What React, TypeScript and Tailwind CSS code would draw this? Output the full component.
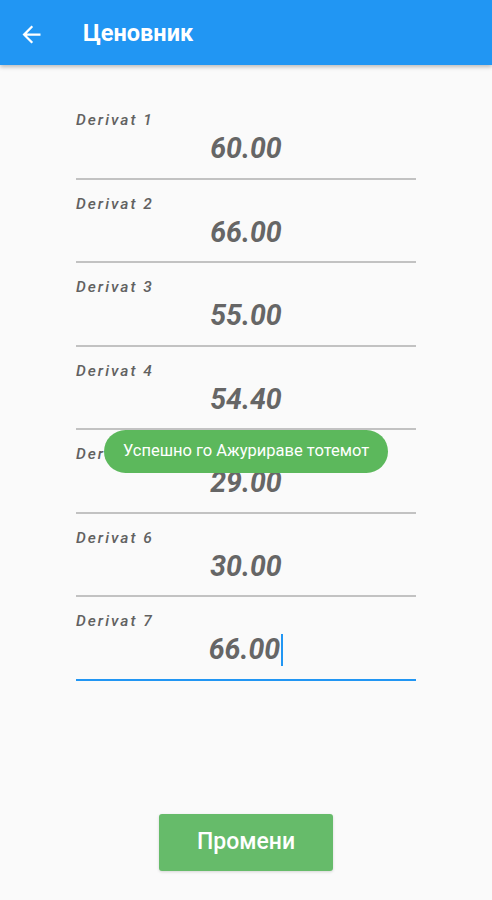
const PRICES = [
  { label: 'Derivat 1', value: '60.00' },
  { label: 'Derivat 2', value: '66.00' },
  { label: 'Derivat 3', value: '55.00' },
  { label: 'Derivat 4', value: '54.40' },
  { label: 'Derivat 5', value: '29.00' },
  { label: 'Derivat 6', value: '30.00' },
  { label: 'Derivat 7', value: '66.00' },
];

function BackArrow() {
  return (
    <svg width="27" height="27" viewBox="0 0 24 24" fill="white">
      <path d="M20 11H7.83l5.59-5.59L12 4l-8 8 8 8 1.41-1.41L7.83 13H20v-2z" />
    </svg>
  );
}

function PriceField({ label, value, focused }: { label: string; value: string; focused?: boolean }) {
  return (
    <div
      className={`flex flex-col h-[83.5px] pt-[15px] border-b-2 ${
        focused ? 'border-[#2196f3]' : 'border-[#c2c2c2]'
      }`}
    >
      <span className="text-[15.5px] leading-[18px] font-medium italic tracking-[2px] text-[#616161]">
        {label}
      </span>
      <div className="flex justify-center items-center h-[36px] mt-[2px]">
        <span className="text-[28.5px] leading-[34px] font-bold italic text-[#666666]">{value}</span>
        {focused && <span className="inline-block w-[2px] h-[32px] bg-[#2196f3] ml-[1px]" />}
      </div>
    </div>
  );
}

export default function App() {
  return (
    <div className="relative min-h-[900px] bg-[#fafafa] font-['Roboto',sans-serif]">
      <div className="flex items-center h-[65px] bg-[#2196f3] shadow-[0_2px_4px_rgba(0,0,0,0.25)]">
        <div className="pl-[18px] pt-[3px]">
          <BackArrow />
        </div>
        <span className="ml-[38px] pt-[3px] text-[23.5px] font-bold text-white">Ценовник</span>
      </div>

      <div className="w-[340px] mx-auto mt-[31px] flex flex-col">
        {PRICES.map((p, i) => (
          <PriceField key={p.label} label={p.label} value={p.value} focused={i === PRICES.length - 1} />
        ))}
      </div>

      <div className="flex justify-center mt-[133px]">
        <button className="w-[174px] h-[57px] rounded-[3px] bg-[#66bb6a] text-white text-[23px] font-medium shadow-[0_1px_3px_rgba(0,0,0,0.15)]">
          Промени
        </button>
      </div>

      <div className="absolute top-[430px] left-1/2 -translate-x-1/2 w-[284px] h-[43px] rounded-full bg-[#5cb85c] flex items-center justify-center">
        <span className="text-[16.5px] text-white">Успешно го Ажурираве тотемот</span>
      </div>
    </div>
  );
}
